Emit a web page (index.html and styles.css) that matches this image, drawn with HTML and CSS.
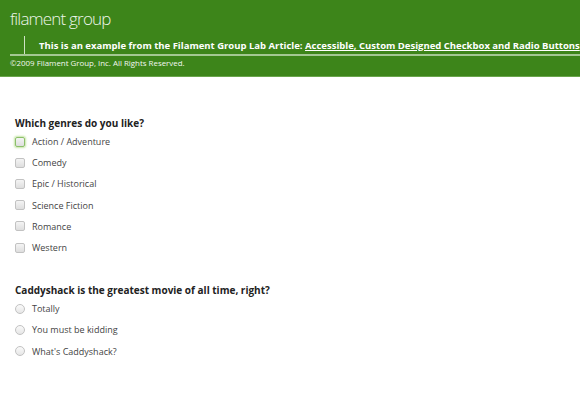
FILE: index.html
```html
<!DOCTYPE html>
<html>
<head>
  <meta charset="utf-8">
  <meta name="viewport" content="width=device-width">
  <title>Filament Group Lab</title>
  <link rel="stylesheet" href="styles.css">
</head>
<body>
  <header class="header">
    <div class="logo">filament group</div>
    <div class="note">
      <p>This is an example from the Filament Group Lab Article: <a href="#">Accessible, Custom Designed Checkbox and Radio Buttons</a></p>
    </div>
    <div class="copy">&copy;2009 Filament Group, Inc. All Rights Reserved.</div>
  </header>

  <form class="demo">
    <fieldset class="group">
      <legend>Which genres do you like?</legend>
      <label class="opt"><span class="check focus"></span>Action / Adventure</label>
      <label class="opt"><span class="check"></span>Comedy</label>
      <label class="opt"><span class="check"></span>Epic / Historical</label>
      <label class="opt"><span class="check"></span>Science Fiction</label>
      <label class="opt"><span class="check"></span>Romance</label>
      <label class="opt"><span class="check"></span>Western</label>
    </fieldset>

    <fieldset class="group">
      <legend>Caddyshack is the greatest movie of all time, right?</legend>
      <label class="opt"><span class="check radio"></span>Totally</label>
      <label class="opt"><span class="check radio"></span>You must be kidding</label>
      <label class="opt"><span class="check radio"></span>What's Caddyshack?</label>
    </fieldset>
  </form>
</body>
</html>
```

FILE: styles.css
```css
body {
  margin: 0;
  font-family: "Open Sans", "Liberation Sans", sans-serif;
  background: #ffffff;
  color: #444444;
}

.header {
  background-color: #3d851a;
  color: #ffffff;
  height: 76px;
  border-bottom: 1px solid #6aa54c;
  overflow: hidden;
}

.logo {
  font-size: 17px;
  font-weight: 300;
  color: #eef5ea;
  padding: 7px 0 0 10px;
  height: 29px;
  letter-spacing: -0.8px;
}

.note {
  margin-left: 10px;
  border-bottom: 2px solid #a4c893;
  height: 18px;
}
.note p {
  margin: 0 0 0 14px;
  padding-left: 14px;
  border-left: 1px solid #cfe2c6;
  height: 18px;
  line-height: 19px;
  font-size: 9.5px;
  font-weight: bold;
  white-space: nowrap;
}
.note a {
  color: #ffffff;
}

.copy {
  font-size: 7.9px;
  padding: 2px 0 0 10px;
  color: #f2f7ef;
}

.demo {
  padding: 39px 0 0 15px;
}

.group {
  border: none;
  margin: 0 0 25px 0;
  padding: 0;
}
.group legend {
  padding: 0;
  font-size: 10px;
  font-weight: bold;
  color: #222222;
  height: 15px;
}

.opt {
  display: flex;
  align-items: center;
  height: 21.2px;
  font-size: 9px;
  color: #444444;
}

.check {
  box-sizing: border-box;
  width: 10px;
  height: 10px;
  margin-right: 7px;
  border: 1px solid #c2c2c2;
  border-radius: 2px;
  background: linear-gradient(#f4f4f4, #dedede);
}
.check.focus {
  border-color: #8cbf6a;
  box-shadow: 0 0 2px 1px #c7e6a8;
}
.check.radio {
  border-radius: 50%;
  background: linear-gradient(#fafafa, #e6e6e6);
}
```
